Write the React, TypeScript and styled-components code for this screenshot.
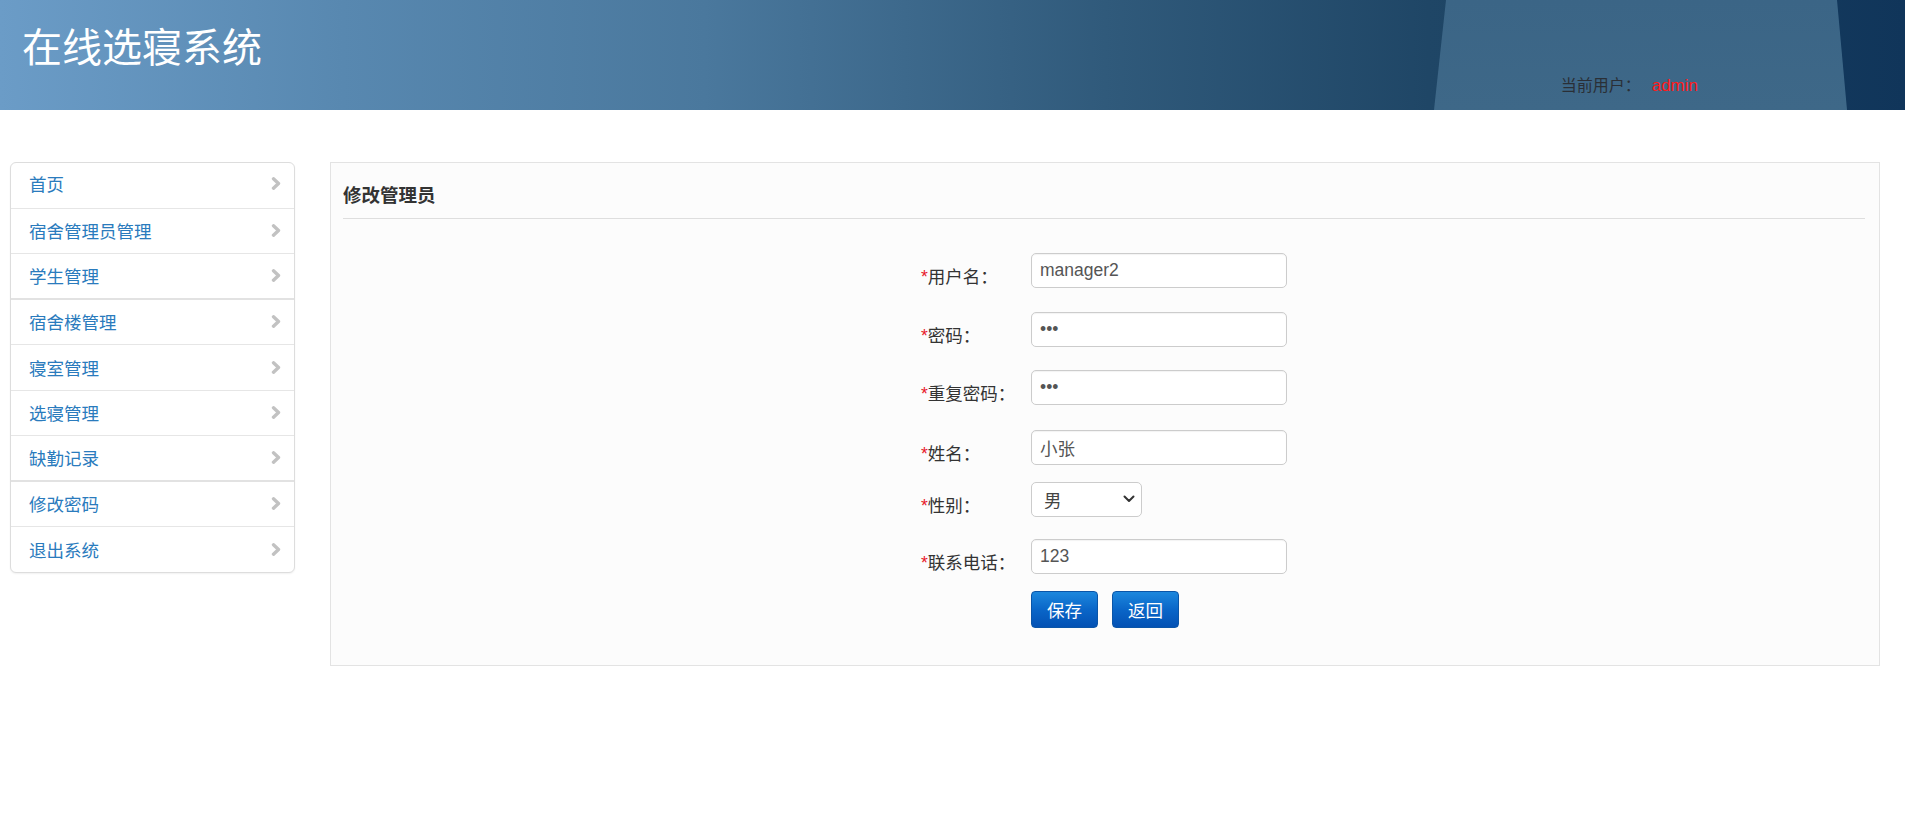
import React from 'react'
import styled, { createGlobalStyle } from 'styled-components'

const GlobalStyle = createGlobalStyle`
  *, *::before, *::after {
    box-sizing: border-box;
  }

  body {
    margin: 0;
    background: #fff;
    font-family: "Noto Sans CJK SC", "Liberation Sans", sans-serif;
    color: #333;
  }
`

const Header = styled.header`
  position: relative;
  height: 110px;
  display: flex;
  background: linear-gradient(90deg, #6b9cc7 0%, #5888b0 18%, #4a789d 37%, #305a7b 58%, #1f4666 75%, #10355a 100%);
  overflow: hidden;

  &::before {
    content: '';
    position: absolute;
    top: 0;
    bottom: 0;
    left: 1434px;
    width: 413px;
    background: linear-gradient(180deg, #3b6586 0%, #3e6888 100%);
    clip-path: polygon(12px 0, 403px 0, 413px 100%, 0 100%);
  }
`

const Logo = styled.h1`
  position: relative;
  margin: 23px 0 0 22px;
  font-size: 40px;
  line-height: 44px;
  font-weight: 400;
  color: #fff;
`

const UserInfo = styled.div`
  position: relative;
  align-self: flex-end;
  margin: 0 207px 14px auto;
  font-size: 16px;
  line-height: 20px;
  color: #2a2f36;
  white-space: nowrap;
`

const UserName = styled.span`
  margin-left: 11px;
  font-family: "Liberation Sans", Arial, sans-serif;
  font-size: 17px;
  color: #ff1a1a;
`

const Body = styled.div`
  display: flex;
  align-items: flex-start;
  gap: 35px;
  padding: 52px 25px 0 10px;
`

const Menu = styled.nav`
  width: 285px;
  flex-shrink: 0;
  border: 1px solid #dddddd;
  border-radius: 6px;
  background: #fff;
  box-shadow: 0 1px 2px rgba(0, 0, 0, 0.06);
  overflow: hidden;
`

const MenuItem = styled.a<{ $groupEnd?: boolean }>`
  display: flex;
  align-items: center;
  justify-content: space-between;
  height: 45.5px;
  padding: 0 12px 0 18px;
  font-size: 17.5px;
  color: #2a7bbd;
  text-decoration: none;
  border-bottom: ${p => (p.$groupEnd ? '2px solid #e2e2e2' : '1px solid #e6e6e6')};

  &:first-child {
    padding-bottom: 3px;
  }

  &:last-child {
    border-bottom: none;
    height: 44.5px;
  }
`

const Chevron = () => (
  <svg width="11" height="13" viewBox="0 0 11 13">
    <polyline points="2.5,1.8 7.5,6.5 2.5,11.2" fill="none" stroke="#c2c2c2" strokeWidth="3.4" strokeLinecap="round" strokeLinejoin="round" />
  </svg>
)

const Panel = styled.section`
  flex: 1;
  border: 1px solid #e3e3e3;
  background: #fcfcfc;
  padding: 0 14px 37px 12px;
`

const PanelTitle = styled.h2`
  margin: 0;
  padding: 19px 0 12px;
  font-size: 18.5px;
  line-height: 24px;
  font-weight: 700;
  color: #333;
  border-bottom: 1px solid #dedede;
`

const Form = styled.form`
  display: grid;
  grid-template-columns: 110px 256px;
  grid-template-rows: 59px 58px 60px 52px 57px 52px auto;
  justify-content: center;
  margin-top: 34px;
`

const Label = styled.label`
  padding-top: 10px;
  font-size: 17.5px;
  line-height: 25px;
  color: #333;
  white-space: nowrap;
`

const Star = styled.span`
  font-family: "Liberation Sans", Arial, sans-serif;
  font-size: 17.5px;
  color: #e8182a;
`

const Input = styled.input`
  width: 256px;
  height: 35px;
  padding: 0 8px;
  border: 1px solid #cccccc;
  border-radius: 5px;
  background: #fff;
  font-family: "Liberation Sans", "Noto Sans CJK SC", sans-serif;
  font-size: 17.5px;
  color: #555;
  box-shadow: inset 0 1px 1px rgba(0, 0, 0, 0.05);
  outline: none;
`

const SelectWrap = styled.div`
  position: relative;
  width: 111px;
  height: 35px;

  svg {
    position: absolute;
    right: 7px;
    top: 13px;
    pointer-events: none;
  }
`

const Select = styled.select`
  appearance: none;
  width: 100%;
  height: 100%;
  padding: 0 10px 0 12px;
  border: 1px solid #cccccc;
  border-radius: 5px;
  background: #fff;
  font-family: "Noto Sans CJK SC", sans-serif;
  font-size: 17.5px;
  color: #444;
  outline: none;
`

const Actions = styled.div`
  grid-column: 2;
  display: flex;
  gap: 14px;
`

const Button = styled.button`
  width: 67px;
  height: 37px;
  border: 1px solid #0a55a8;
  border-radius: 4px;
  background: linear-gradient(180deg, #1c87dd 0%, #0a66c8 50%, #0351b4 100%);
  color: #fff;
  font-family: "Noto Sans CJK SC", sans-serif;
  font-size: 17.5px;
  line-height: 1;
  padding: 0;
  cursor: pointer;
`

const menu = [
  { name: '首页' },
  { name: '宿舍管理员管理' },
  { name: '学生管理', groupEnd: true },
  { name: '宿舍楼管理' },
  { name: '寝室管理' },
  { name: '选寝管理' },
  { name: '缺勤记录', groupEnd: true },
  { name: '修改密码' },
  { name: '退出系统' },
]

export default function App() {
  return (
    <>
      <GlobalStyle />
      <Header>
        <Logo>在线选寝系统</Logo>
        <UserInfo>
          当前用户：<UserName>admin</UserName>
        </UserInfo>
      </Header>
      <Body>
        <Menu>
          {menu.map(item => (
            <MenuItem key={item.name} href="#" $groupEnd={item.groupEnd}>
              {item.name}
              <Chevron />
            </MenuItem>
          ))}
        </Menu>
        <Panel>
          <PanelTitle>修改管理员</PanelTitle>
          <Form onSubmit={e => e.preventDefault()}>
            <Label><Star>*</Star>用户名：</Label>
            <Input defaultValue="manager2" />
            <Label><Star>*</Star>密码：</Label>
            <Input type="password" defaultValue="123" />
            <Label><Star>*</Star>重复密码：</Label>
            <Input type="password" defaultValue="123" />
            <Label><Star>*</Star>姓名：</Label>
            <Input defaultValue="小张" />
            <Label><Star>*</Star>性别：</Label>
            <SelectWrap>
              <Select defaultValue="男">
                <option>男</option>
                <option>女</option>
              </Select>
              <svg width="12" height="8" viewBox="0 0 12 8">
                <polyline points="1.5,1.5 6,6 10.5,1.5" fill="none" stroke="#333" strokeWidth="2" strokeLinecap="round" strokeLinejoin="round" />
              </svg>
            </SelectWrap>
            <Label><Star>*</Star>联系电话：</Label>
            <Input defaultValue="123" />
            <Actions>
              <Button type="submit">保存</Button>
              <Button type="button">返回</Button>
            </Actions>
          </Form>
        </Panel>
      </Body>
    </>
  )
}
